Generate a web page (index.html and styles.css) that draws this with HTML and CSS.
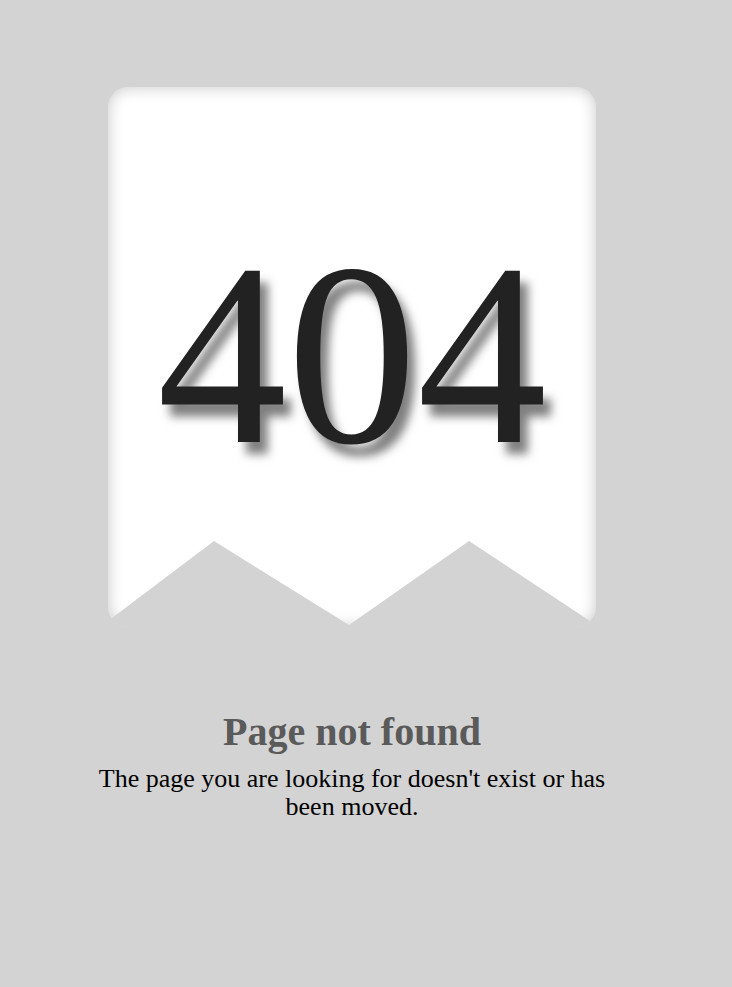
FILE: index.html
```html
<!DOCTYPE html>
<html lang="en">
<head>
<meta charset="utf-8">
<title>404</title>
<link rel="stylesheet" href="styles.css">
</head>
<body>
<main class="wrap">
  <div class="card">
    <span class="code">404</span>
    <svg class="notch" viewBox="0 0 488 110" width="488" height="110" aria-hidden="true">
      <polygon points="0,80 106,0 241,84 361,0 488,84 488,110 0,110" />
    </svg>
  </div>
  <h1 class="title">Page not found</h1>
  <p class="msg">The page you are looking for doesn't exist or has been moved.</p>
</main>
</body>
</html>
```
FILE: styles.css
```css
html, body {
  margin: 0;
  padding: 0;
  background: #d3d3d3;
}
body {
  font-family: "Liberation Serif", "Times New Roman", serif;
}
.wrap {
  width: 520px;
  margin-left: 92px;
  padding-top: 87px;
  display: flex;
  flex-direction: column;
  align-items: center;
}
.card {
  position: relative;
  width: 488px;
  height: 540px;
  background: #fff;
  border-radius: 20px;
  box-shadow: inset 0 0 16px rgba(0, 0, 0, 0.22);
  display: flex;
  align-items: center;
  justify-content: center;
  overflow: hidden;
}
.code {
  font-size: 260px;
  line-height: normal;
  margin-bottom: 6px;
  color: #222;
  text-shadow: 8px 12px 10px rgba(0, 0, 0, 0.5);
}
.notch {
  position: absolute;
  left: 0;
  top: 454px;
  display: block;
}
.notch polygon {
  fill: #d3d3d3;
}
.title {
  margin: 81px 0 0;
  font-size: 40px;
  font-weight: bold;
  color: #5a5a5a;
  line-height: normal;
}
.msg {
  margin: 10px 0 0;
  font-size: 26px;
  line-height: 28px;
  color: #000;
  text-align: center;
}
```
